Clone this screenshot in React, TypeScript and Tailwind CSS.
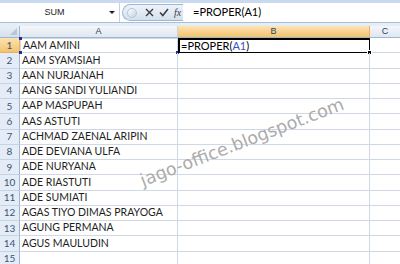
import React from 'react';

const names = [
  'AAM AMINI',
  'AAM SYAMSIAH',
  'AAN NURJANAH',
  'AANG SANDI YULIANDI',
  'AAP MASPUPAH',
  'AAS ASTUTI',
  'ACHMAD ZAENAL ARIPIN',
  'ADE DEVIANA ULFA',
  'ADE NURYANA',
  'ADE RIASTUTI',
  'ADE SUMIATI',
  'AGAS TIYO DIMAS PRAYOGA',
  'AGUNG PERMANA',
  'AGUS MAULUDIN',
  '',
];

const FormulaBar: React.FC = () => (
  <div className="flex h-[20px] bg-white border-b border-[#a9bfd6]">
    <div className="w-[120px] flex items-center border-r border-[#c3d1e3] relative">
      <span className="flex-1 text-center text-[9px] text-[#222] pr-[10px]">SUM</span>
      <span className="absolute right-[4px] top-[8px] w-0 h-0 border-l-[3px] border-r-[3px] border-t-[3px] border-l-transparent border-r-transparent border-t-[#222]" />
    </div>
    <div className="w-[61px] my-[1px] ml-[2px] flex items-center rounded-l-full border border-r-0 border-[#9fb6d3] bg-gradient-to-b from-[#eef3fa] to-[#d5e0ee]">
      <span className="ml-[4px] w-[10px] h-[10px] rounded-full bg-gradient-to-br from-[#ffffff] to-[#c7d2df] border border-[#b9c6d6]" />
      <svg className="ml-[8px]" width="9" height="9" viewBox="0 0 9 9">
        <path d="M1 1 L8 8 M8 1 L1 8" stroke="#3b3b3b" strokeWidth="1.4" />
      </svg>
      <svg className="ml-[5px]" width="10" height="9" viewBox="0 0 10 9">
        <path d="M1 4.5 L3.8 7.5 L9 1" stroke="#3b3b3b" strokeWidth="1.5" fill="none" />
      </svg>
      <span className="ml-[5px] text-[10px] italic text-[#3b3b3b] font-['Liberation_Serif',serif]">fx</span>
    </div>
    <div className="flex-1 flex items-center pl-[10px] text-[11px] text-black font-['Lato',sans-serif]">=PROPER(A1)</div>
  </div>
);

const App: React.FC = () => {
  return (
    <div className="relative w-[400px] h-[264px] overflow-hidden bg-white font-['Liberation_Sans',Arial,sans-serif]">
      <div className="h-[3px] bg-[#c9d9ee]" />
      <FormulaBar />
      <div className="h-[3px] bg-[#e6edf6]" />

      <div className="flex h-[12px] border-b border-[#9eb6ce] text-[9px] text-[#27415f]">
        <div className="w-[20px] relative bg-gradient-to-b from-[#e8eef6] to-[#d6e0ec] border-r border-[#9eb6ce]">
          <span className="absolute right-[2px] bottom-[2px] w-0 h-0 [border-bottom:7px_solid_#b5c6da] [border-left:7px_solid_transparent]" />
        </div>
        <div className="w-[158px] flex items-center justify-center bg-gradient-to-b from-[#f4f7fb] to-[#dfe7f1] border-r border-[#c5d3e3]">A</div>
        <div className="w-[192px] flex items-center justify-center bg-gradient-to-b from-[#fbe3b3] to-[#f3c36a] border-r border-[#e9b260]">B</div>
        <div className="flex-1 flex items-center justify-center bg-gradient-to-b from-[#f4f7fb] to-[#dfe7f1]">C</div>
      </div>

      {names.map((n, i) => {
        const first = i === 0;
        return (
          <div key={i} className="flex h-[15.25px] text-[10.5px] font-['Lato',sans-serif]">
            <div
              className={`w-[20px] flex items-center justify-center border-r border-b text-[10px] text-[#3e5574] ${
                first
                  ? 'bg-gradient-to-b from-[#fbe3b3] to-[#f3c36a] border-[#e9b260]'
                  : 'bg-[#e4ecf7] border-[#9eb6ce] border-b-[#c5d3e3]'
              }`}
            >
              {i + 1}
            </div>
            <div
              className={`w-[158px] flex items-center pl-[2px] text-[#1e1e1e] border-r border-b border-[#d0d7e5] relative ${
                first ? 'border border-[#4a4ab8]' : ''
              }`}
            >
              {n}
              {first && (
                <>
                  <span className="absolute -left-[2px] -top-[2px] w-[3px] h-[3px] bg-[#2a2aa0]" />
                  <span className="absolute -left-[2px] -bottom-[2px] w-[3px] h-[3px] bg-[#2a2aa0]" />
                  <span className="absolute -right-[2px] -bottom-[2px] w-[3px] h-[3px] bg-[#2a2aa0]" />
                </>
              )}
            </div>
            <div
              className={`w-[192px] flex items-center border-b border-r border-[#d0d7e5] relative ${
                first ? 'border-2 border-black pl-[1px] text-[11px]' : ''
              }`}
            >
              {first && (
                <>
                  <span className="text-black">=PROPER(</span>
                  <span className="text-[#3a4fc4]">A1</span>
                  <span className="text-black">)</span>
                  <span className="absolute -right-[3px] -bottom-[3px] w-[5px] h-[5px] bg-black border border-white" />
                </>
              )}
            </div>
            <div className="flex-1 border-b border-[#d0d7e5]" />
          </div>
        );
      })}

      <div className="absolute left-[117px] top-[128px] w-[250px] text-center leading-[28px] -rotate-[21deg] text-[17.5px] text-[#ababab] font-['DejaVu_Sans',sans-serif] pointer-events-none">
        jago-office.blogspot.com
      </div>
    </div>
  );
};

export default App;
